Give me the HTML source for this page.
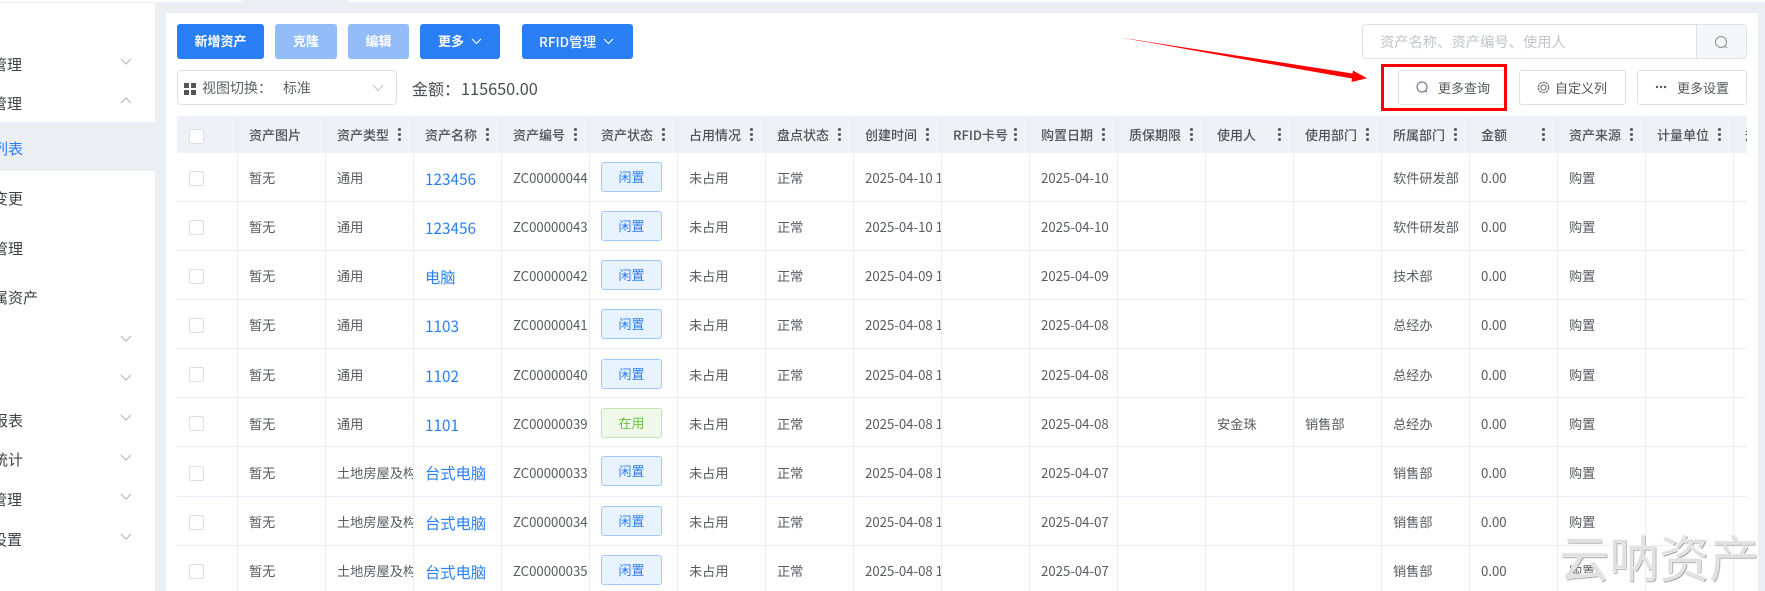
<!DOCTYPE html>
<html lang="zh-CN"><head><meta charset="utf-8"><title>资产列表</title>
<style>
*{box-sizing:border-box}
html,body{margin:0;padding:0;width:1765px;height:591px;overflow:hidden;background:#ebeef3}
body{position:relative;font-family:"Noto Sans CJK SC","Liberation Sans",sans-serif;font-size:13px;color:#606266}
.a{position:absolute}
#root{position:absolute;left:0;top:0;width:1765px;height:591px;filter:blur(.3px)}
.side{left:0;top:3px;width:155px;height:588px;background:#fff}
.active{left:0;top:122px;width:155px;height:49px;background:#ebeef3}
.st{position:absolute;white-space:nowrap;font-size:15px;line-height:20px;color:#3f4247;transform:translateY(-50%)}
.chev{position:absolute;left:120px}
.main{left:166px;top:13px;width:1592px;height:578px;background:#fff}
.btn{position:absolute;top:24px;height:35px;background:#2a7ff5;border-radius:3px;color:#fff;font-weight:700;font-size:13px;line-height:34px;text-align:center;white-space:nowrap}
.dis{background:#93bdf9}
.ob{position:absolute;top:70px;height:35px;border:1px solid #dfe2ea;border-radius:3px;background:#fff}
.ob span{position:absolute;top:7px;line-height:20px;font-size:13px;white-space:nowrap;color:#55585e}
.wrap{left:177px;top:116px;width:1570px;height:475px;overflow:hidden}
table{border-collapse:separate;border-spacing:0;table-layout:fixed;width:1643px}
col{width:88px}col.c0{width:61px}
th,td{border-right:1px solid #ebeef5;border-bottom:1px solid #ebeef5;padding:0 0 0 11px;overflow:hidden;white-space:nowrap;text-align:left;font-size:13.2px;position:relative}
th{height:37px;background:#eef1f6;font-size:13px;font-weight:500;color:#4f5257;border-color:#e9ecf2;border-bottom:0;padding-bottom:1px}
td{height:49px;color:#585b61;padding-top:1px}
tr.s td{padding-top:3px}
tr.t td{height:50px}
.d{position:absolute;left:72px;top:17px;width:3px;height:3px;border-radius:50%;background:#555;box-shadow:0 -5px 0 #555,0 5px 0 #555}
.cb{position:absolute;left:12px;top:50%;margin-top:-6px;width:15px;height:15px;border:1px solid #dcdfe6;border-radius:2px;background:#fff}
.l{color:#2a7ff5;font-size:15.3px;display:inline-block;position:relative;top:1px}
.tag{display:block;width:61px;height:30px;line-height:28px;font-size:13px;text-align:center;border:1px solid #a3c8fa;background:#e9f2ff;color:#2a7ff5;border-radius:3px;position:relative;top:-1px}
.g{border-color:#c2e7b0;background:#f0f9eb;color:#67c23a}
.wm{left:1559px;top:526px;font-size:50px;line-height:60px;white-space:nowrap;color:#e0e0e0;-webkit-text-stroke:.6px #f6f6f6;text-shadow:1px 1px 1px #8c8c8c;font-family:"WenQuanYi Zen Hei","Noto Sans CJK SC",sans-serif}
</style></head><body><div id="root">
<div class="a" style="left:0;top:0;width:1765px;height:2px;background:#fff"></div>
<div class="a" style="left:241px;top:0;width:108px;height:2px;background:#eceef2"></div>

<div class="a side"></div>
<div class="a active"></div>
<span class="st" style="right:1743px;top:65px">资产管理</span>
<span class="st" style="right:1743px;top:104px">资产管理</span>
<span class="st" style="right:1742px;top:149px;color:#2a7ff5">资产列表</span>
<span class="st" style="right:1742px;top:199px">资产变更</span>
<span class="st" style="right:1742px;top:249px">资产管理</span>
<span class="st" style="right:1727px;top:298px">我的下属资产</span>
<span class="st" style="right:1742px;top:421px">资产报表</span>
<span class="st" style="right:1742px;top:460px">分析统计</span>
<span class="st" style="right:1743px;top:500px">系统管理</span>
<span class="st" style="right:1743px;top:540px">系统设置</span>
<svg class="chev" style="top:58px" width="12" height="7" viewBox="0 0 12 7"><path d="M1 1l5 5 5-5" fill="none" stroke="#b0b3b8"/></svg>
<svg class="chev" style="top:97px" width="12" height="7" viewBox="0 0 12 7"><path d="M1 6l5-5 5 5" fill="none" stroke="#b0b3b8"/></svg>
<svg class="chev" style="top:335px" width="12" height="7" viewBox="0 0 12 7"><path d="M1 1l5 5 5-5" fill="none" stroke="#b0b3b8"/></svg>
<svg class="chev" style="top:374px" width="12" height="7" viewBox="0 0 12 7"><path d="M1 1l5 5 5-5" fill="none" stroke="#b0b3b8"/></svg>
<svg class="chev" style="top:414px" width="12" height="7" viewBox="0 0 12 7"><path d="M1 1l5 5 5-5" fill="none" stroke="#b0b3b8"/></svg>
<svg class="chev" style="top:454px" width="12" height="7" viewBox="0 0 12 7"><path d="M1 1l5 5 5-5" fill="none" stroke="#b0b3b8"/></svg>
<svg class="chev" style="top:493px" width="12" height="7" viewBox="0 0 12 7"><path d="M1 1l5 5 5-5" fill="none" stroke="#b0b3b8"/></svg>
<svg class="chev" style="top:533px" width="12" height="7" viewBox="0 0 12 7"><path d="M1 1l5 5 5-5" fill="none" stroke="#b0b3b8"/></svg>

<div class="a main"></div>

<div class="btn" style="left:177px;width:87px">新增资产</div>
<div class="btn dis" style="left:275px;width:62px">克隆</div>
<div class="btn dis" style="left:348px;width:61px">编辑</div>
<div class="btn" style="left:420px;width:80px;text-align:left;padding-left:18px">更多</div>
<svg class="a" style="left:471px;top:38px" width="11" height="7" viewBox="0 0 11 7"><path d="M1 1l4.5 4.5L10 1" fill="none" stroke="#fff" stroke-width="1.1"/></svg>
<div class="btn" style="left:522px;width:111px;text-align:left;padding-left:17px;font-weight:500;font-size:13.5px">RFID管理</div>
<svg class="a" style="left:603px;top:38px" width="11" height="7" viewBox="0 0 11 7"><path d="M1 1l4.5 4.5L10 1" fill="none" stroke="#fff" stroke-width="1.1"/></svg>

<div class="a" style="left:177px;top:70px;width:220px;height:35px;border:1px solid #dfe2ea;border-radius:4px;background:#fff"></div>
<div class="a" style="left:184px;top:83px;width:5px;height:5px;background:#555"></div>
<div class="a" style="left:191px;top:83px;width:5px;height:5px;background:#555"></div>
<div class="a" style="left:184px;top:90px;width:5px;height:5px;background:#555"></div>
<div class="a" style="left:191px;top:90px;width:5px;height:5px;background:#555"></div>
<span class="a" style="left:202px;top:78px;font-size:14px;line-height:20px;white-space:nowrap;color:#5f6268">视图切换&#65306;</span>
<span class="a" style="left:283px;top:78px;font-size:14px;line-height:20px;white-space:nowrap;color:#5f6268">标准</span>
<svg class="a" style="left:372px;top:84px" width="12" height="8" viewBox="0 0 12 8"><path d="M1 1l5 5.5L11 1" fill="none" stroke="#c0c4cc"/></svg>
<span class="a" style="left:412px;top:77px;font-size:16px;line-height:22px;white-space:nowrap;color:#4a4d52">金额&#65306;</span>
<span class="a" style="left:461px;top:77px;font-size:16.3px;line-height:22px;white-space:nowrap;color:#4a4d52">115650.00</span>

<div class="a" style="left:1362px;top:24px;width:385px;height:35px;border:1px solid #dfe2ea;border-radius:4px;background:#fff;overflow:hidden">
<div class="a" style="right:0;top:0;width:50px;height:33px;background:#f5f7fa;border-left:1px solid #dfe2ea"></div>
<span class="a" style="left:17px;top:7px;font-size:14.3px;line-height:20px;color:#c0c4cc;white-space:nowrap">资产名称、资产编号、使用人</span>
</div>
<svg class="a" style="left:1714px;top:35px" width="15" height="15" viewBox="0 0 15 15"><circle cx="7" cy="7" r="5.5" fill="none" stroke="#8a9099"/><path d="M11 11l2 2" stroke="#8a9099"/></svg>

<div class="ob" style="left:1398px;width:109px"><span style="left:39px">更多查询</span></div>
<svg class="a" style="left:1415px;top:80px" width="14" height="15" viewBox="0 0 14 15"><circle cx="7" cy="7" r="5" fill="none" stroke="#5f6d85"/><path d="M10.5 10.5l1.8 1.8" stroke="#5f6d85"/></svg>
<div class="ob" style="left:1519px;width:107px"><span style="left:35px">自定义列</span></div>
<svg class="a" style="left:1537px;top:81px" width="13" height="13" viewBox="0 0 13 13"><circle cx="6.5" cy="6.5" r="5.2" fill="none" stroke="#66696f" stroke-width="1.2" stroke-dasharray="2.6 .7"/><circle cx="6.5" cy="6.5" r="2.6" fill="none" stroke="#66696f"/></svg>
<div class="ob" style="left:1637px;width:110px"><span style="left:39px">更多设置</span></div>
<svg class="a" style="left:1655px;top:85px" width="12" height="4" viewBox="0 0 12 4"><circle cx="2" cy="2" r="1.2" fill="#555"/><circle cx="6" cy="2" r="1.2" fill="#555"/><circle cx="10" cy="2" r="1.2" fill="#555"/></svg>

<div class="a wrap"><table><colgroup><col class="c0"><col><col><col><col><col><col><col><col><col><col><col><col><col><col><col><col><col><col></colgroup>
<tr><th><span class="cb"></span></th><th>资产图片</th><th>资产类型<i class="d"></i></th><th>资产名称<i class="d"></i></th><th>资产编号<i class="d"></i></th><th>资产状态<i class="d"></i></th><th>占用情况<i class="d"></i></th><th>盘点状态<i class="d"></i></th><th>创建时间<i class="d"></i></th><th>RFID卡号<i class="d"></i></th><th>购置日期<i class="d"></i></th><th>质保期限<i class="d"></i></th><th>使用人<i class="d"></i></th><th>使用部门<i class="d"></i></th><th>所属部门<i class="d"></i></th><th>金额<i class="d"></i></th><th>资产来源<i class="d"></i></th><th>计量单位<i class="d"></i></th><th>规格型号</th></tr>
<tr><td><span class="cb"></span></td><td>暂无</td><td>通用</td><td><span class="l">123456</span></td><td>ZC00000044</td><td><span class="tag">闲置</span></td><td>未占用</td><td>正常</td><td>2025-04-10 14:20:11</td><td></td><td>2025-04-10</td><td></td><td></td><td></td><td>软件研发部</td><td>0.00</td><td>购置</td><td></td><td></td></tr>
<tr><td><span class="cb"></span></td><td>暂无</td><td>通用</td><td><span class="l">123456</span></td><td>ZC00000043</td><td><span class="tag">闲置</span></td><td>未占用</td><td>正常</td><td>2025-04-10 14:18:35</td><td></td><td>2025-04-10</td><td></td><td></td><td></td><td>软件研发部</td><td>0.00</td><td>购置</td><td></td><td></td></tr>
<tr><td><span class="cb"></span></td><td>暂无</td><td>通用</td><td><span class="l">电脑</span></td><td>ZC00000042</td><td><span class="tag">闲置</span></td><td>未占用</td><td>正常</td><td>2025-04-09 10:12:40</td><td></td><td>2025-04-09</td><td></td><td></td><td></td><td>技术部</td><td>0.00</td><td>购置</td><td></td><td></td></tr>
<tr><td><span class="cb"></span></td><td>暂无</td><td>通用</td><td><span class="l">1103</span></td><td>ZC00000041</td><td><span class="tag">闲置</span></td><td>未占用</td><td>正常</td><td>2025-04-08 15:30:02</td><td></td><td>2025-04-08</td><td></td><td></td><td></td><td>总经办</td><td>0.00</td><td>购置</td><td></td><td></td></tr>
<tr class="s"><td><span class="cb"></span></td><td>暂无</td><td>通用</td><td><span class="l">1102</span></td><td>ZC00000040</td><td><span class="tag">闲置</span></td><td>未占用</td><td>正常</td><td>2025-04-08 15:28:47</td><td></td><td>2025-04-08</td><td></td><td></td><td></td><td>总经办</td><td>0.00</td><td>购置</td><td></td><td></td></tr>
<tr class="s"><td><span class="cb"></span></td><td>暂无</td><td>通用</td><td><span class="l">1101</span></td><td>ZC00000039</td><td><span class="tag g">在用</span></td><td>未占用</td><td>正常</td><td>2025-04-08 15:26:13</td><td></td><td>2025-04-08</td><td></td><td>安金珠</td><td>销售部</td><td>总经办</td><td>0.00</td><td>购置</td><td></td><td></td></tr>
<tr class="t"><td><span class="cb"></span></td><td>暂无</td><td>土地房屋及构筑物</td><td><span class="l">台式电脑</span></td><td>ZC00000033</td><td><span class="tag">闲置</span></td><td>未占用</td><td>正常</td><td>2025-04-08 11:05:20</td><td></td><td>2025-04-07</td><td></td><td></td><td></td><td>销售部</td><td>0.00</td><td>购置</td><td></td><td></td></tr>
<tr><td><span class="cb"></span></td><td>暂无</td><td>土地房屋及构筑物</td><td><span class="l">台式电脑</span></td><td>ZC00000034</td><td><span class="tag">闲置</span></td><td>未占用</td><td>正常</td><td>2025-04-08 11:05:20</td><td></td><td>2025-04-07</td><td></td><td></td><td></td><td>销售部</td><td>0.00</td><td>购置</td><td></td><td></td></tr>
<tr><td><span class="cb"></span></td><td>暂无</td><td>土地房屋及构筑物</td><td><span class="l">台式电脑</span></td><td>ZC00000035</td><td><span class="tag">闲置</span></td><td>未占用</td><td>正常</td><td>2025-04-08 11:05:20</td><td></td><td>2025-04-07</td><td></td><td></td><td></td><td>销售部</td><td>0.00</td><td>购置</td><td></td><td></td></tr>
</table></div>

<svg class="a" style="left:0;top:0" width="1765" height="591" viewBox="0 0 1765 591">
<rect x="1382.5" y="65.5" width="123" height="44" fill="none" stroke="#f00" stroke-width="3"/>
<polygon points="1120.5,37.5 1352.5,73.5 1353,70.5 1367,78.3 1351.5,82 1352,78.5" fill="#f00"/>
</svg>
<div class="a wm">云呐资产</div>
</div></body></html>
